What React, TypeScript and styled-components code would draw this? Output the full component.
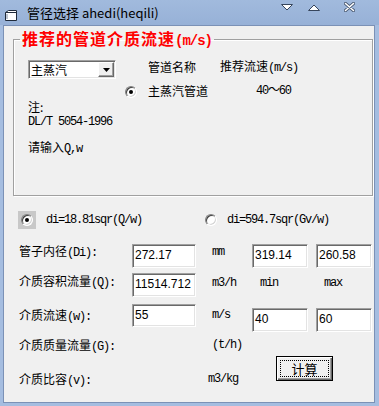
import styled, { createGlobalStyle } from 'styled-components'

const GlobalStyle = createGlobalStyle`
  html, body { margin: 0; padding: 0; background: #ffffff; }
  body {
    font-family: "Noto Sans CJK SC", "Noto Sans", sans-serif;
    font-size: 12px;
    color: #000;
  }
`

function Radio({ checked }: { checked?: boolean }) {
  return <RadioDot $checked={!!checked} />
}

function App() {
  return (
    <Frame>
      <GlobalStyle />
      <TitleBar>
        <svg width="12" height="11" viewBox="0 0 12 11" style={{ marginTop: 10 }}>
          <path d="M0.5 2.5 L3.5 0.5 L11.5 0.5 L11.5 10.5 L0.5 10.5 Z" fill="#fff" stroke="#1f2a3a" />
          <path d="M0.5 2.5 L11.5 2.5" stroke="#1f2a3a" />
          <path d="M2 4 L2 9" stroke="#7c8aa0" />
        </svg>
        <Caption>管径选择 ahedi(heqili)</Caption>
        <CtrlIcon $ml={0} width="12" height="7" viewBox="0 0 12 7">
          <polygon points="0.5,0.5 11.5,0.5 6,6" fill="#fff" stroke="#36455c" />
        </CtrlIcon>
        <CtrlIcon $ml={15} width="12" height="7" viewBox="0 0 12 7" $mt={4}>
          <polygon points="0.5,6.5 11.5,6.5 6,1" fill="#fff" stroke="#36455c" />
        </CtrlIcon>
        <CtrlIcon $ml={24} width="11" height="10" viewBox="0 0 11 10" $mt={2}>
          <path d="M1.5 1.5 L9.5 8.5 M9.5 1.5 L1.5 8.5" stroke="#4a5a72" strokeWidth="3.2" strokeLinecap="round" />
          <path d="M1.5 1.5 L9.5 8.5 M9.5 1.5 L1.5 8.5" stroke="#fff" strokeWidth="1.6" strokeLinecap="round" />
        </CtrlIcon>
      </TitleBar>

      <Client>
        <Group>
          <Legend>
            推荐的管道介质流速<LegendUnit>(m/s)</LegendUnit>
          </Legend>
          <GroupBody>
            <LeftCol>
              <Combo>
                <ComboText>主蒸汽</ComboText>
                <ComboButton>
                  <svg width="7" height="4" viewBox="0 0 7 4">
                    <polygon points="0,0 7,0 3.5,4" fill="#000" />
                  </svg>
                </ComboButton>
              </Combo>
              <Note $top={21}>注:</Note>
              <Mono $top={1}>DL/T 5054-1996</Mono>
              <Note $top={11}>请输入<SmallMono>Q,w</SmallMono></Note>
            </LeftCol>
            <PipeTable>
              <span />
              <Cell>管道名称</Cell>
              <Cell>
                推荐流速<SmallMono>(m/s)</SmallMono>
              </Cell>
              <RadioCell>
                <Radio checked />
              </RadioCell>
              <Cell>主蒸汽管道</Cell>
              <Speed>40～60</Speed>
            </PipeTable>
          </GroupBody>
        </Group>

        <FormulaRow>
          <Option>
            <FocusBox>
              <Radio checked />
            </FocusBox>
            <Mono $top={0}>di=18.81sqr(Q/w)</Mono>
          </Option>
          <Option>
            <Radio />
            <Mono $top={0}>di=594.7sqr(Gv/w)</Mono>
          </Option>
        </FormulaRow>

        <Form>
          <Label $top={0}>管子内径<SmallMono>(Di):</SmallMono></Label>
          <TextBox $top={0} $wide>272.17</TextBox>
          <Unit $top={1}>mm</Unit>
          <TextBox $top={0}>319.14</TextBox>
          <TextBox $top={0}>260.58</TextBox>

          <Label $top={1}>介质容积流量<SmallMono>(Q):</SmallMono></Label>
          <TextBox $top={0} $wide>11514.712</TextBox>
          <Unit $top={3}>m3/h</Unit>
          <Unit $top={3} $left={8}>min</Unit>
          <Unit $top={3} $left={8}>max</Unit>

          <Label $top={4}>介质流速<SmallMono>(w):</SmallMono></Label>
          <TextBox $top={0} $wide $h={23}>55</TextBox>
          <Unit $top={4}>m/s</Unit>
          <TextBox $top={4}>40</TextBox>
          <TextBox $top={4}>60</TextBox>

          <Label $top={0}>介质质量流量<SmallMono>(G):</SmallMono></Label>
          <span />
          <Unit $top={0}>(t/h)</Unit>
          <CalcButton>
            <FocusRect>计算</FocusRect>
          </CalcButton>

          <Label $top={0}>介质比容<SmallMono>(v):</SmallMono></Label>
          <span />
          <Unit $top={0} $left={-4}>m3/kg</Unit>
        </Form>
      </Client>
    </Frame>
  )
}

export default App

const Frame = styled.div`
  width: 379px;
  height: 406px;
  box-sizing: border-box;
  display: flex;
  flex-direction: column;
  background: linear-gradient(180deg, #a1badd 0px, #97b1d7 25px, #a5bde0 25px);
`

const TitleBar = styled.div`
  height: 25px;
  display: flex;
  align-items: flex-start;
  padding-left: 5px;
`

const Caption = styled.div`
  margin-left: 10px;
  font-size: 13px;
  line-height: 26px;
  color: #000;
  width: 254px;
  white-space: nowrap;
`

const CtrlIcon = styled.svg<{ $ml: number; $mt?: number }>`
  margin-left: ${(p) => p.$ml}px;
  margin-top: ${(p) => p.$mt ?? 4}px;
  flex-shrink: 0;
`

const Client = styled.div`
  flex: 1;
  margin: 0 4px 3px 3px;
  background: #f0f0f0;
  border: 1px solid #7b91b6;
  display: flex;
  flex-direction: column;
`

const Group = styled.fieldset`
  box-sizing: border-box;
  margin: 2px 0 0 9px;
  padding: 0;
  width: 360px;
  height: 168px;
  border: 1px solid #a0a0a0;
  box-shadow: 1px 1px 0 #ffffff, inset 1px 1px 0 #ffffff;
  min-width: 0;
`

const Legend = styled.legend`
  margin-left: 6px;
  padding: 0 2px;
  color: #ff0000;
  font-weight: 700;
  font-size: 16px;
  line-height: 20px;
  letter-spacing: 1px;
`

const LegendUnit = styled.span`
  font-family: "Liberation Mono", monospace;
  font-size: 14px;
  letter-spacing: -1px;
`

const GroupBody = styled.div`
  display: flex;
  padding: 9px 0 0 14px;
`

const LeftCol = styled.div`
  width: 97px;
  display: flex;
  flex-direction: column;
  align-items: flex-start;
`

const Combo = styled.div`
  box-sizing: border-box;
  width: 88px;
  height: 19px;
  display: flex;
  align-items: center;
  background: #fff;
  border: 1px solid;
  border-color: #a0a0a0 #ffffff #ffffff #a0a0a0;
  box-shadow: inset 1px 1px 0 #696969, inset -1px -1px 0 #e3e3e3;
`

const ComboText = styled.span`
  flex: 1;
  padding-left: 2px;
  font-size: 12px;
  line-height: 15px;
`

const ComboButton = styled.div`
  box-sizing: border-box;
  width: 16px;
  height: 15px;
  margin-right: 1px;
  display: flex;
  align-items: center;
  justify-content: center;
  background: #f0f0f0;
  border: 1px solid;
  border-color: #ffffff #696969 #696969 #ffffff;
  box-shadow: inset -1px -1px 0 #a0a0a0;
`

const Note = styled.div<{ $top: number }>`
  margin-top: ${(p) => p.$top}px;
  font-size: 12px;
  line-height: 14px;
  white-space: nowrap;
`

const Mono = styled.span<{ $top: number }>`
  display: block;
  margin-top: ${(p) => p.$top}px;
  font-family: "Liberation Mono", "Noto Sans CJK SC", monospace;
  font-size: 12px;
  letter-spacing: -1.2px;
  line-height: 14px;
  white-space: nowrap;
`

const SmallMono = styled.span`
  font-family: "Liberation Mono", monospace;
  font-size: 12px;
  letter-spacing: -1.2px;
`

const PipeTable = styled.div`
  display: grid;
  grid-template-columns: 23px 72px auto;
  grid-template-rows: 16px 16px;
  row-gap: 8px;
  margin-top: -1px;
  align-items: center;
`

const Cell = styled.div`
  font-size: 12px;
  line-height: 16px;
  white-space: nowrap;
`

const RadioCell = styled.div`
  display: flex;
  align-items: center;
  padding-top: 2px;
`

const Speed = styled.div`
  padding-left: 36px;
  font-family: "Liberation Mono", "Noto Sans CJK SC", monospace;
  font-size: 12px;
  letter-spacing: -1.2px;
  line-height: 16px;
`

const RadioDot = styled.span<{ $checked: boolean }>`
  position: relative;
  box-sizing: border-box;
  display: inline-block;
  width: 12px;
  height: 12px;
  border-radius: 50%;
  border: 1px solid;
  border-color: #808080 #ffffff #ffffff #808080;
  background: #fff;
  box-shadow: inset 1px 1px 0 #404040, inset -1px -1px 0 #d4d4d4;
  flex-shrink: 0;

  &::after {
    content: '';
    display: ${(p) => (p.$checked ? 'block' : 'none')};
    position: absolute;
    left: 3px;
    top: 3px;
    width: 4px;
    height: 4px;
    border-radius: 50%;
    background: #000;
  }
`

const FormulaRow = styled.div`
  display: grid;
  grid-template-columns: 187px auto;
  height: 18px;
  margin-top: 15px;
  padding-left: 14px;
  align-items: center;
`

const Option = styled.div`
  display: flex;
  align-items: center;
  gap: 10px;
`

const FocusBox = styled.div`
  width: 18px;
  height: 18px;
  display: flex;
  align-items: center;
  justify-content: center;
  background: #c8c8c8;
`

const Form = styled.div`
  display: grid;
  grid-template-columns: 113px 80px 40px 64px 56px;
  grid-template-rows: 29px 31px 34px 34px 30px;
  margin-top: 15px;
  padding-left: 15px;
  align-items: start;
`

const Label = styled.div<{ $top: number }>`
  margin-top: ${(p) => p.$top}px;
  font-size: 12px;
  line-height: 14px;
  white-space: nowrap;
`

const Unit = styled.div<{ $top: number; $left?: number }>`
  margin-top: ${(p) => p.$top}px;
  margin-left: ${(p) => p.$left ?? 0}px;
  font-family: "Liberation Mono", monospace;
  font-size: 12px;
  letter-spacing: -1.2px;
  line-height: 14px;
  white-space: nowrap;
`

const TextBox = styled.div<{ $top: number; $h?: number; $wide?: boolean }>`
  box-sizing: border-box;
  margin-top: ${(p) => p.$top}px;
  width: ${(p) => (p.$wide ? 64 : 56)}px;
  height: ${(p) => p.$h ?? 24}px;
  padding: 3px 0 0 2px;
  background: #fff;
  border: 1px solid;
  border-color: #a0a0a0 #ffffff #ffffff #a0a0a0;
  box-shadow: inset 1px 1px 0 #696969, inset -1px -1px 0 #e3e3e3;
  font-family: "Liberation Sans", sans-serif;
  font-size: 12px;
  line-height: 14px;
`

const CalcButton = styled.div`
  grid-column: 4 / span 2;
  grid-row: 4 / span 2;
  box-sizing: border-box;
  margin: 18px 0 0 24px;
  width: 57px;
  height: 25px;
  padding: 3px;
  background: #f0f0f0;
  border: 1px solid #000;
  box-shadow: inset 1px 1px 0 #ffffff, inset -1px -1px 0 #696969, inset -2px -2px 0 #a0a0a0;
`

const FocusRect = styled.div`
  box-sizing: border-box;
  height: 100%;
  border: 1px dotted #000;
  display: flex;
  align-items: center;
  justify-content: center;
  font-size: 13px;
  line-height: 15px;
`
